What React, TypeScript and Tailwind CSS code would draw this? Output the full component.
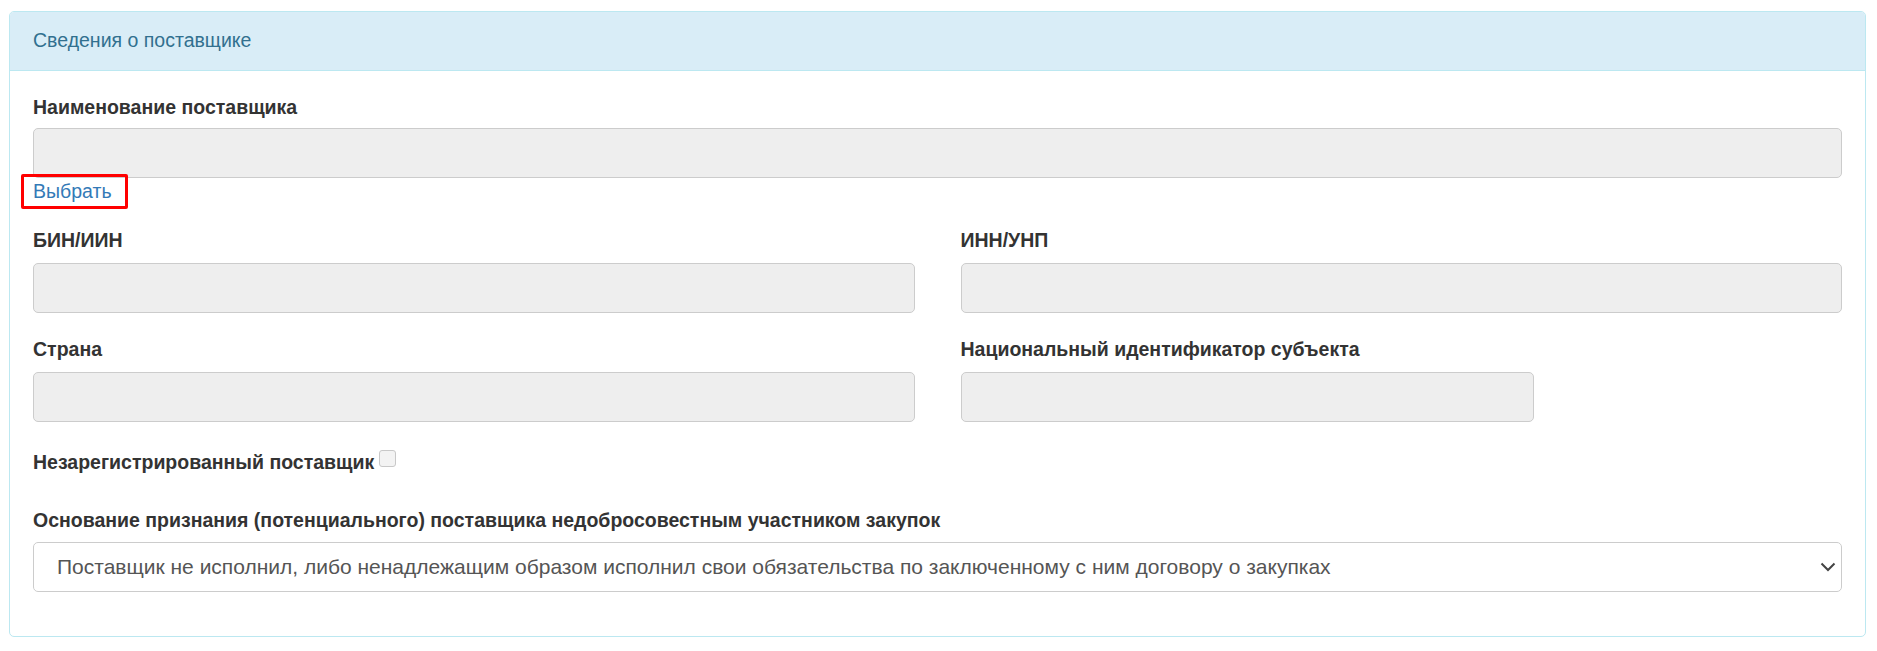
export default function App() {
    return (
        <div className="min-h-[651px] bg-white pt-[11px] pl-[9px] pr-[11px] font-['Liberation_Sans',Arial,sans-serif] text-[#333]">
            <div className="border border-[#bce8f1] rounded-[5px] overflow-hidden">
                <div className="h-[59px] bg-[#d9edf7] border-b border-[#bce8f1] px-[23px] flex items-center">
                    <h3 className="text-[19.5px] text-[#31708f]">Сведения о поставщике</h3>
                </div>
                <div className="px-[23px] pt-[23px] pb-[44px]">
                    <div className="mb-[22px]">
                        <label className="block text-[19.5px] leading-[27px] font-bold mb-[7px]">Наименование поставщика</label>
                        <div className="h-[50px] bg-[#eee] border border-[#ccc] rounded-[5px]" />
                        <div className="relative inline-block">
                            <a href="#" className="block text-[19.5px] leading-[27px] text-[#337ab7]">Выбрать</a>
                            <span className="absolute left-[-12px] top-[-4px] w-[107px] h-[35px] border-[3px] border-[#ff0000] rounded-[2px]" />
                        </div>
                    </div>

                    <div className="grid grid-cols-2 gap-x-[46px]">
                        <div className="mb-[23px]">
                            <label className="block text-[19.5px] leading-[27px] font-bold mb-[9px]">БИН/ИИН</label>
                            <div className="h-[50px] bg-[#eee] border border-[#ccc] rounded-[5px]" />
                        </div>
                        <div className="mb-[23px]">
                            <label className="block text-[19.5px] leading-[27px] font-bold mb-[9px]">ИНН/УНП</label>
                            <div className="h-[50px] bg-[#eee] border border-[#ccc] rounded-[5px]" />
                        </div>
                        <div className="mb-[27px]">
                            <label className="block text-[19.5px] leading-[27px] font-bold mb-[9px]">Страна</label>
                            <div className="h-[50px] bg-[#eee] border border-[#ccc] rounded-[5px]" />
                        </div>
                        <div className="mb-[27px]">
                            <label className="block text-[19.5px] leading-[27px] font-bold mb-[9px]">Национальный идентификатор субъекта</label>
                            <div className="h-[50px] w-[573px] bg-[#eee] border border-[#ccc] rounded-[5px]" />
                        </div>
                    </div>

                    <div className="mb-[31px] flex items-center gap-[5px]">
                        <span className="text-[19.5px] leading-[27px] font-bold">Незарегистрированный поставщик</span>
                        <span className="w-[17px] h-[17px] bg-[#f3f3f3] border border-[#c8c8c8] rounded-[3px] -translate-y-[4px]" />
                    </div>

                    <div>
                        <label className="block text-[19.5px] leading-[27px] font-bold mb-[8px]">Основание признания (потенциального) поставщика недобросовестным участником закупок</label>
                        <div className="h-[50px] bg-white border border-[#ccc] rounded-[5px] flex items-center justify-between pl-[23px] pr-[5px]">
                            <span className="text-[21px] text-[#555]">Поставщик не исполнил, либо ненадлежащим образом исполнил свои обязательства по заключенному с ним договору о закупках</span>
                            <svg width="16" height="10" viewBox="0 0 16 10" fill="none">
                                <polyline points="1.5,1.5 8,8 14.5,1.5" stroke="#444" strokeWidth="2" />
                            </svg>
                        </div>
                    </div>
                </div>
            </div>
        </div>
    );
}
